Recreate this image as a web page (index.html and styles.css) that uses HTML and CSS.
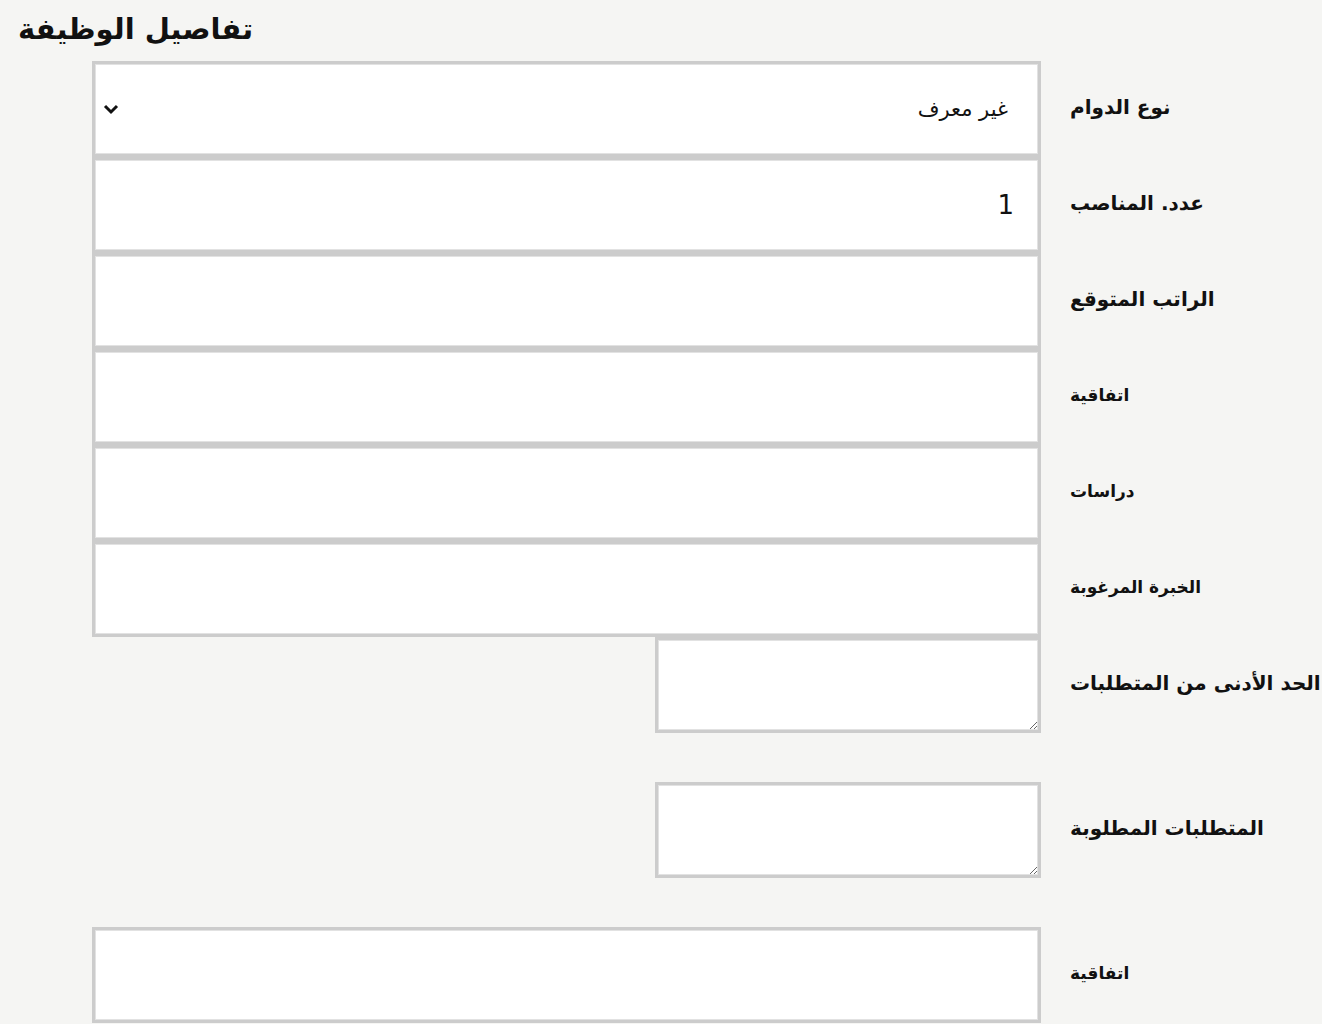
FILE: index.html
```html
<!DOCTYPE html>
<html lang="ar">
<head>
<meta charset="utf-8">
<title>تفاصيل الوظيفة</title>
<link rel="stylesheet" href="styles.css">
</head>
<body>
<h1 class="title">تفاصيل الوظيفة</h1>
<form class="form">
  <div class="row">
    <div class="field">
      <div class="select-wrap">
        <select class="box select" dir="rtl">
          <option>غير معرف</option>
        </select>
        <svg class="chevron" width="18" height="12" viewBox="0 0 18 12"><path d="M3 3 L9 9 L15 3" fill="none" stroke="#111" stroke-width="3"/></svg>
      </div>
    </div>
    <label class="label big">نوع الدوام</label>
  </div>
  <div class="row">
    <div class="field"><input class="box input num" dir="rtl" value="1"></div>
    <label class="label big">عدد. المناصب</label>
  </div>
  <div class="row">
    <div class="field"><input class="box input" dir="rtl"></div>
    <label class="label big">الراتب المتوقع</label>
  </div>
  <div class="row">
    <div class="field"><input class="box input" dir="rtl"></div>
    <label class="label small">اتفاقية</label>
  </div>
  <div class="row">
    <div class="field"><input class="box input" dir="rtl"></div>
    <label class="label small">دراسات</label>
  </div>
  <div class="row">
    <div class="field"><input class="box input" dir="rtl"></div>
    <label class="label small">الخبرة المرغوبة</label>
  </div>
  <div class="row row-gap">
    <div class="field field-end"><textarea class="box area"></textarea></div>
    <label class="label big">الحد الأدنى من المتطلبات</label>
  </div>
  <div class="row row-gap">
    <div class="field field-end"><textarea class="box area"></textarea></div>
    <label class="label big">المتطلبات المطلوبة</label>
  </div>
  <div class="row">
    <div class="field"><input class="box input" dir="rtl"></div>
    <label class="label small">اتفاقية</label>
  </div>
</form>
</body>
</html>
```
FILE: styles.css
```css
html, body {
  margin: 0;
  padding: 0;
  background: #f5f5f3;
  color: #111;
  font-family: "DejaVu Sans", "Liberation Sans", sans-serif;
  overflow: hidden;
}

.title {
  margin: 0;
  height: 61px;
  box-sizing: border-box;
  padding: 7px 0 0 18px;
  font-size: 29px;
  font-weight: bold;
  line-height: 44px;
  text-align: left;
}

.form {
  display: flex;
  flex-direction: column;
}

.row {
  display: flex;
  align-items: center;
  height: 96px;
}

.row-gap {
  margin-bottom: 49px;
}

.field {
  display: flex;
  flex-shrink: 0;
  width: 949px;
  margin-left: 92px;
  height: 96px;
}

.field-end {
  justify-content: flex-end;
}

.box {
  box-sizing: border-box;
  height: 96px;
  border: 3px solid #cccccc;
  box-shadow: inset 0 0 0 1px #e2e2e2;
  background: #ffffff;
  margin: 0;
  outline: none;
  font-family: "DejaVu Sans", "Liberation Sans", sans-serif;
  color: #111;
}

.select-wrap {
  position: relative;
  width: 100%;
}

.select {
  width: 100%;
  appearance: none;
  -webkit-appearance: none;
  border-radius: 0;
  font-size: 21px;
  padding: 0 30px 0 40px;
  text-align: right;
}

.chevron {
  position: absolute;
  left: 10px;
  top: 42px;
}

.input {
  width: 100%;
  padding: 0 24px;
  font-size: 16px;
  text-align: right;
}

.num {
  font-size: 26px;
  font-family: "DejaVu Sans", sans-serif;
}

.area {
  flex-shrink: 0;
  width: 386px;
  resize: both;
  padding: 4px;
}

.label {
  flex-shrink: 0;
  margin-left: 29px;
  margin-bottom: 4px;
  font-weight: bold;
  white-space: nowrap;
}

.big {
  font-size: 20px;
}

.small {
  font-size: 17px;
}
```
